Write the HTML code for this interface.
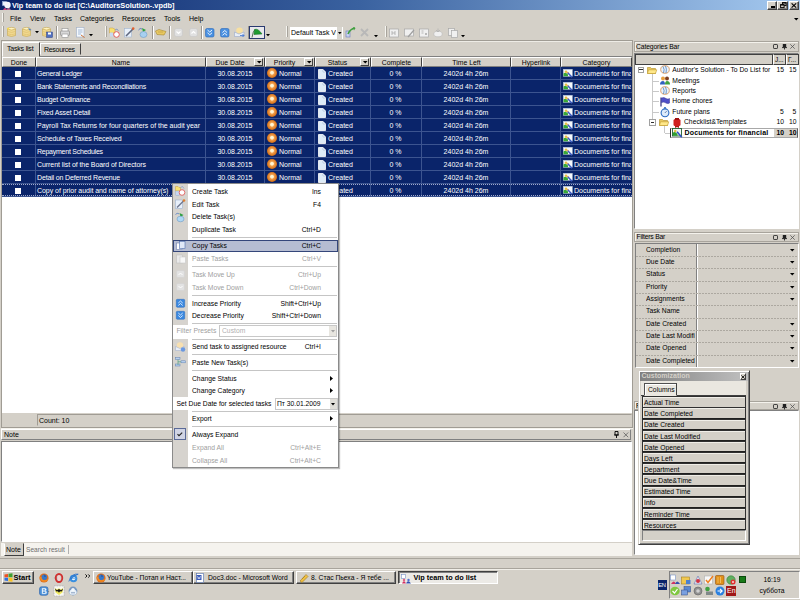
<!DOCTYPE html>
<html><head><meta charset="utf-8">
<style>
*{margin:0;padding:0;box-sizing:border-box}
html,body{width:800px;height:600px;overflow:hidden;background:#D4D0C8;font-family:"Liberation Sans",sans-serif;font-size:7px;color:#000;position:relative}
.a{position:absolute}
.t{position:absolute;white-space:nowrap;line-height:8px;font-size:7px}
.m{font-size:6.75px}
svg{position:absolute;overflow:visible}
</style></head><body>

<div class="a" style="left:0px;top:0px;width:800px;height:10px;background:linear-gradient(90deg,#0A246A 0%,#3A62A0 45%,#A6CAF0 100%)"></div>
<svg style="left:2px;top:1px" width="9" height="9"><rect x="0.5" y="0.5" width="4" height="4" fill="#E8F0FF" stroke="#A0B8E0" stroke-width="0.5"/><circle cx="5.5" cy="4" r="3.2" fill="#F4F4FA"/><path d="M1 9Q3 5 5 9Z" fill="#D04080"/><path d="M4.5 9Q6.5 5 9 9Z" fill="#B06090"/></svg>
<div class="t" style="left:12px;top:1.5px;color:#fff;font-weight:bold;font-size:7.4px;line-height:8px">Vip team to do list [C:\AuditorsSolution-.vpdb]</div>
<div class="a" style="left:767px;top:1px;width:10px;height:8.5px;background:#D4D0C8;border:1px solid;border-color:#fff #404040 #404040 #fff;box-shadow:inset -1px -1px 0 #808080"></div>
<div class="a" style="left:777px;top:1px;width:10.5px;height:8.5px;background:#D4D0C8;border:1px solid;border-color:#fff #404040 #404040 #fff;box-shadow:inset -1px -1px 0 #808080"></div>
<div class="a" style="left:788.5px;top:1px;width:10.5px;height:8.5px;background:#D4D0C8;border:1px solid;border-color:#fff #404040 #404040 #fff;box-shadow:inset -1px -1px 0 #808080"></div>
<div class="a" style="left:770.5px;top:6.3px;width:4px;height:1.3px;background:#000"></div>
<svg style="left:779.5px;top:2px" width="7" height="6"><rect x="2.5" y="0.6" width="3.5" height="3" fill="none" stroke="#000" stroke-width="0.9"/><rect x="2.5" y="0.5" width="3.5" height="1" fill="#000"/><rect x="0.6" y="2.6" width="3.5" height="3" fill="#D4D0C8" stroke="#000" stroke-width="0.9"/><rect x="0.6" y="2.5" width="3.5" height="1" fill="#000"/></svg>
<svg style="left:791px;top:2.5px" width="6" height="5"><path d="M0.6 0.4L5.2 4.6M5.2 0.4L0.6 4.6" stroke="#000" stroke-width="1.2"/></svg>
<div class="a" style="left:2px;top:13px;width:2px;height:9px;border-left:1px solid #F4F4F0;border-right:1px solid #A8A49C"></div>
<div class="t" style="left:10px;top:14.8px;line-height:8px">File</div>
<div class="t" style="left:30px;top:14.8px;line-height:8px">View</div>
<div class="t" style="left:54px;top:14.8px;line-height:8px">Tasks</div>
<div class="t" style="left:80px;top:14.8px;line-height:8px">Categories</div>
<div class="t" style="left:122px;top:14.8px;line-height:8px">Resources</div>
<div class="t" style="left:164px;top:14.8px;line-height:8px">Tools</div>
<div class="t" style="left:189px;top:14.8px;line-height:8px">Help</div>
<svg style="left:793.5px;top:18px" width="5" height="3"><path d="M0 0H4.5L2.25 2.5Z" fill="#000"/></svg>
<div class="a" style="left:2px;top:26px;width:2px;height:11px;border-left:1px solid #F4F4F0;border-right:1px solid #A8A49C"></div>
<svg style="left:7px;top:27px" width="10" height="11"><ellipse cx="4.5" cy="2" rx="4" ry="1.6" fill="#FFF4C0" stroke="#C8A850" stroke-width="0.6"/><path d="M0.5 2V8.5Q4.5 10.5 8.5 8.5V2Q4.5 4 0.5 2Z" fill="#F0D890" stroke="#C8A850" stroke-width="0.6"/><path d="M0.8 4.5Q4.5 6.3 8.2 4.5M0.8 6.8Q4.5 8.6 8.2 6.8" stroke="#D8B860" stroke-width="0.5" fill="none"/><path d="M0 1L1.5 0.5L2 2L1 3Z" fill="#FFE040"/></svg>
<svg style="left:22px;top:27px" width="10" height="11"><ellipse cx="4.5" cy="2" rx="4" ry="1.6" fill="#FFF4C0" stroke="#C8A850" stroke-width="0.6"/><path d="M0.5 2V8.5Q4.5 10.5 8.5 8.5V2Q4.5 4 0.5 2Z" fill="#F0D890" stroke="#C8A850" stroke-width="0.6"/><path d="M0.8 4.5Q4.5 6.3 8.2 4.5M0.8 6.8Q4.5 8.6 8.2 6.8" stroke="#D8B860" stroke-width="0.5" fill="none"/><path d="M6 0.5L9.5 3L7.5 3.5Z" fill="#4A80D0"/></svg>
<svg style="left:35px;top:31px" width="4" height="3"><path d="M0 0H4L2 2.3Z" fill="#000"/></svg>
<svg style="left:42px;top:27px" width="11" height="11"><ellipse cx="4.5" cy="2" rx="4" ry="1.6" fill="#FFF4C0" stroke="#C8A850" stroke-width="0.6"/><path d="M0.5 2V8.5Q4.5 10.5 8.5 8.5V2Q4.5 4 0.5 2Z" fill="#F0D890" stroke="#C8A850" stroke-width="0.6"/><path d="M0.8 4.5Q4.5 6.3 8.2 4.5M0.8 6.8Q4.5 8.6 8.2 6.8" stroke="#D8B860" stroke-width="0.5" fill="none"/><rect x="4.5" y="5" width="6" height="5.5" fill="#5070C0" stroke="#304080" stroke-width="0.5"/><rect x="6" y="5.5" width="3" height="2" fill="#fff"/></svg>
<div class="a" style="left:55.5px;top:25.5px;width:2px;height:13px;border-left:1px solid #9A9690;border-right:1px solid #fff"></div>
<svg style="left:60px;top:28px" width="10" height="10"><rect x="2" y="0.5" width="6" height="3" fill="#fff" stroke="#909090" stroke-width="0.6"/><rect x="0.5" y="3" width="9" height="4.5" rx="1" fill="#D8D8D8" stroke="#808080" stroke-width="0.6"/><rect x="2" y="6" width="6" height="3.5" fill="#fff" stroke="#909090" stroke-width="0.6"/></svg>
<svg style="left:75.5px;top:27px" width="9" height="11"><rect x="0.5" y="0.5" width="7.5" height="9.5" fill="#F4F8FC" stroke="#A0B0C8" stroke-width="0.6"/><path d="M2 3H6.5M2 5H6.5M2 7H5" stroke="#7090C0" stroke-width="0.6"/><path d="M5 8L8.5 10.5" stroke="#D07030" stroke-width="1"/></svg>
<svg style="left:88.5px;top:33.5px" width="4" height="3"><path d="M0 0H4L2 2.3Z" fill="#000"/></svg>
<div class="a" style="left:104.5px;top:26px;width:2px;height:11px;border-left:1px solid #F4F4F0;border-right:1px solid #A8A49C"></div>
<svg style="left:109px;top:27px" width="11" height="11"><path d="M0.5 1H4L5 2H6V6H0.5Z" fill="#F8E070" stroke="#C8A040" stroke-width="0.5"/><rect x="1" y="5.5" width="3" height="4" fill="#C8D8F0"/><circle cx="7.5" cy="7.5" r="2.8" fill="#fff" stroke="#E04040" stroke-width="0.8"/><path d="M6 3L8 2L9.5 4" stroke="#6080C0" stroke-width="0.6" fill="none"/></svg>
<svg style="left:124px;top:27px" width="11" height="11"><rect x="0.5" y="1.5" width="7" height="8.5" fill="#E8F0FA" stroke="#A0B4D0" stroke-width="0.6"/><path d="M2 9L9 2" stroke="#606880" stroke-width="1.6"/><circle cx="9.2" cy="1.6" r="1.3" fill="#E06030"/></svg>
<svg style="left:138px;top:27px" width="11" height="11"><path d="M0.5 3Q2 0.5 4 2" stroke="#6080C0" stroke-width="1" fill="none"/><path d="M4 1L8 3L5 5Z" fill="#30A040"/><ellipse cx="5.5" cy="7.5" rx="3.5" ry="3" fill="#A8D0F0" stroke="#6090C0" stroke-width="0.5"/></svg>
<div class="a" style="left:151.5px;top:25.5px;width:2px;height:13px;border-left:1px solid #9A9690;border-right:1px solid #fff"></div>
<svg style="left:155px;top:29px" width="12" height="7"><path d="M0.5 2L4 0.5L11 2.5L9 6L2 5.5Z" fill="#E8C860" stroke="#A88830" stroke-width="0.6"/><path d="M3 3H8" stroke="#B89840" stroke-width="0.6"/></svg>
<div class="a" style="left:168.5px;top:25.5px;width:2px;height:13px;border-left:1px solid #9A9690;border-right:1px solid #fff"></div>
<svg style="left:174px;top:27.5px" width="9" height="9"><rect x="0.5" y="0.5" width="8" height="8" rx="2" fill="#E0E0E0" stroke="#C8C8C8" stroke-width="0.6"/><path d="M2.5 3.5L4.5 5.5L6.5 3.5" stroke="#fff" stroke-width="1.1" fill="none"/></svg>
<svg style="left:189px;top:27.5px" width="9" height="9"><rect x="0.5" y="0.5" width="8" height="8" rx="2" fill="#E0E0E0" stroke="#C8C8C8" stroke-width="0.6"/><path d="M2.5 5.5L4.5 3.5L6.5 5.5" stroke="#fff" stroke-width="1.1" fill="none"/></svg>
<div class="a" style="left:201px;top:25.5px;width:2px;height:13px;border-left:1px solid #9A9690;border-right:1px solid #fff"></div>
<svg style="left:205px;top:27.5px" width="9.5" height="9.5"><rect x="0.5" y="0.5" width="8.5" height="8.5" rx="1.5" fill="#4A90E0" stroke="#2A68B8" stroke-width="0.6"/><path d="M2.5 2L4.75 4L7 2M2.5 4.8L4.75 6.8L7 4.8" stroke="#fff" stroke-width="0.9" fill="none"/></svg>
<svg style="left:220px;top:27.5px" width="9.5" height="9.5"><rect x="0.5" y="0.5" width="8.5" height="8.5" rx="1.5" fill="#4A90E0" stroke="#2A68B8" stroke-width="0.6"/><path d="M2.5 4.5L4.75 2.5L7 4.5M2.5 7.3L4.75 5.3L7 7.3" stroke="#fff" stroke-width="0.9" fill="none"/></svg>
<svg style="left:234px;top:27px" width="11" height="11"><circle cx="5.5" cy="3.8" r="3.3" fill="#F8E0A0"/><path d="M0.5 5L5 7L10 5V9.5H0.5Z" fill="#E8EEF8" stroke="#9AAAC8" stroke-width="0.6"/><path d="M6 8.5H10L8.5 7M10 8.5L8.5 10" stroke="#3A70D0" stroke-width="0.8" fill="none"/></svg>
<div class="a" style="left:247.5px;top:25.5px;width:2px;height:13px;border-left:1px solid #9A9690;border-right:1px solid #fff"></div>
<div class="a" style="left:249px;top:26px;width:15.5px;height:12.5px;background:#E8E8EC;border:1px solid #2A3A70"></div>
<svg style="left:251px;top:27.5px" width="12" height="10"><path d="M1 9.5Q2 3 4 1.5" stroke="#305030" stroke-width="0.8" fill="none"/><path d="M3.5 1.5Q7 0 11 6L3 6.5Z" fill="#1E9A30" stroke="#0E6A20" stroke-width="0.5"/></svg>
<svg style="left:266px;top:34px" width="4" height="3"><path d="M0 0H4L2 2.3Z" fill="#000"/></svg>
<div class="a" style="left:286px;top:26px;width:2px;height:11px;border-left:1px solid #F4F4F0;border-right:1px solid #A8A49C"></div>
<div class="a" style="left:289.5px;top:26.5px;width:53px;height:12.5px;background:#fff"></div>
<div class="t" style="left:291px;top:28.5px;width:45px;overflow:hidden;font-size:7px">Default Task View</div>
<div class="a" style="left:336.5px;top:27px;width:5.5px;height:11.5px;background:#D8D5CE"></div>
<svg style="left:337.5px;top:32px" width="4" height="3"><path d="M0 0H3.6L1.8 2.2Z" fill="#000"/></svg>
<svg style="left:345px;top:27px" width="11" height="11"><rect x="1" y="4" width="4" height="6" fill="#C8D0F0" stroke="#6878C0" stroke-width="0.6"/><path d="M3 7Q5 2 10 1" stroke="#40A040" stroke-width="1.6" fill="none"/><path d="M8 0L10.5 1L9 3.5" fill="#40A040"/></svg>
<svg style="left:360px;top:28px" width="9" height="9"><path d="M1 1L8 8M8 1L1 8" stroke="#B8B8B8" stroke-width="1.8"/></svg>
<svg style="left:374px;top:34.5px" width="4" height="3"><path d="M0 0H4L2 2.3Z" fill="#000"/></svg>
<div class="a" style="left:384.5px;top:26px;width:2px;height:11px;border-left:1px solid #F4F4F0;border-right:1px solid #A8A49C"></div>
<svg style="left:389px;top:27.5px" width="10.5" height="10"><rect x="0.5" y="1" width="9" height="8" fill="#F0F0F0" stroke="#A8A8A8" stroke-width="0.7"/><path d="M3 3V7M6 3V7M3 5H6" stroke="#A0A0A0" stroke-width="0.7"/></svg>
<svg style="left:403.5px;top:27.5px" width="11" height="10"><rect x="0.5" y="1" width="9" height="7" fill="#F0F0F0" stroke="#A8A8A8" stroke-width="0.7"/><path d="M4 9L10 2" stroke="#A0A0A0" stroke-width="1.2"/></svg>
<svg style="left:419px;top:27.5px" width="10" height="10"><rect x="0.5" y="1" width="9" height="8" fill="#F0F0F0" stroke="#A8A8A8" stroke-width="0.7"/><path d="M2.5 3H4.5M2.5 5H4.5M6 5L8 7M8 5L6 7" stroke="#A0A0A0" stroke-width="0.7"/></svg>
<svg style="left:433px;top:28px" width="10" height="9"><ellipse cx="5" cy="6" rx="4.2" ry="2.8" fill="#F0F0F0" stroke="#B8B8B8" stroke-width="0.6"/><path d="M5 0.5V4M3 2L5 4L7 2" stroke="#B0B0B0" stroke-width="0.7" fill="none"/></svg>
<svg style="left:448px;top:27.5px" width="10" height="10"><rect x="0.5" y="0.5" width="6" height="7" fill="#F0F0F0" stroke="#A8A8A8" stroke-width="0.7"/><rect x="3.5" y="2.5" width="6" height="7" fill="#F0F0F0" stroke="#A8A8A8" stroke-width="0.7"/></svg>
<svg style="left:461px;top:34.5px" width="4" height="3"><path d="M0 0H4L2 2.3Z" fill="#000"/></svg>
<div class="a" style="left:0px;top:558px;width:800px;height:1px;background:#A8A49C"></div>
<div class="a" style="left:0px;top:568px;width:800px;height:1px;background:#A8A49C"></div>
<div class="a" style="left:0px;top:569px;width:800px;height:1px;background:#F0EEE8"></div>
<div class="a" style="left:1.5px;top:571px;width:32px;height:13px;background:#D4D0C8;border:1px solid;border-color:#fff #404040 #404040 #fff;box-shadow:inset -1px -1px 0 #808080"></div>
<svg style="left:3.5px;top:573px" width="9" height="9"><path d="M0.5 1.5L4 1V4.2H0.5Z" fill="#F05020"/><path d="M4.5 0.8L8.5 0.3V4.2H4.5Z" fill="#40A030"/><path d="M0.5 4.8H4V8L0.5 7.5Z" fill="#3070E0"/><path d="M4.5 4.8H8.5V8.7L4.5 8.2Z" fill="#F8C020"/></svg>
<div class="t" style="left:13.5px;top:573.5px;font-weight:bold;font-size:7.5px;line-height:8px">Start</div>
<svg style="left:38.5px;top:573px" width="10" height="10"><circle cx="5" cy="5" r="4.6" fill="#E0701C"/><circle cx="5.3" cy="4.3" r="2.8" fill="#3A78C8"/><path d="M0.6 4Q1.5 8.5 5.5 8.8Q8.5 8.5 9.4 5Q8 7.5 5.5 7.2Q2.5 7 2.5 4Z" fill="#F08A20"/><path d="M5 1.5Q6.5 2.5 6 4" stroke="#1A3A80" stroke-width="0.7" fill="none"/></svg>
<svg style="left:53px;top:573px" width="10" height="10"><path d="M0.5 5L4 3.5V6.5Z" fill="#A8A8A8"/><ellipse cx="6" cy="5" rx="3.3" ry="4" fill="none" stroke="#D03030" stroke-width="1.8"/><ellipse cx="6" cy="5" rx="1.3" ry="2.8" fill="#F4D0D0"/></svg>
<svg style="left:67.5px;top:573px" width="11" height="10"><circle cx="5.5" cy="5.5" r="3.8" fill="#3A90E0"/><circle cx="5.5" cy="5.5" r="1.8" fill="#E8F4FF"/><path d="M3.5 5.2H7.5" stroke="#3A90E0" stroke-width="0.8"/><path d="M0.8 8.5Q4 0 10.2 1.2Q7 1.5 3 6" stroke="#2A70C8" stroke-width="0.9" fill="none"/></svg>
<svg style="left:39px;top:586px" width="11" height="10"><rect x="0.5" y="0.8" width="8.5" height="8.5" rx="2" fill="#4A90D8" stroke="#2A60A8" stroke-width="0.6"/><path d="M3 2.3H5.8Q7.3 2.3 7.3 3.6Q7.3 4.6 6.2 4.9Q7.7 5.2 7.7 6.5Q7.7 7.8 6 7.8H3Z" fill="#fff" stroke="#C8E0F8" stroke-width="0.4"/><path d="M3.8 3.3H5.5Q6.2 3.3 6.2 4Q6.2 4.5 5.5 4.5H3.8ZM3.8 5.4H5.7Q6.5 5.4 6.5 6.2Q6.5 6.9 5.7 6.9H3.8Z" fill="#4A90D8"/><path d="M9 5L10.5 5.5L9 6" fill="#707070"/></svg>
<svg style="left:54px;top:586px" width="10" height="10"><rect x="0" y="0" width="10" height="10" fill="#F8F8F0" stroke="#8080A0" stroke-width="0.5" stroke-dasharray="0.8 0.8"/><path d="M0.8 2L3 3.5L5 2.2L7 3.5L9.2 2L8.5 6.5L5 9L1.5 6.5Z" fill="#F0E860"/><path d="M1 2.5L3 4.2L5 3L7 4.2L9 2.5L8 5.5Q6 4.8 5 6.8Q4 4.8 2 5.5Z" fill="#111"/></svg>
<svg style="left:68px;top:586px" width="10" height="10"><circle cx="5" cy="5" r="4.4" fill="#7898C0"/><ellipse cx="5" cy="6.2" rx="3.6" ry="2.6" fill="#E8F0F8"/><circle cx="5" cy="3.6" r="1.7" fill="#F4F8FC"/><path d="M3 6.8H7" stroke="#4A6A98" stroke-width="0.6"/></svg>
<svg style="left:84.5px;top:574px" width="6" height="4"><path d="M0.4 0.4L2 2L0.4 3.6M3.2 0.4L4.8 2L3.2 3.6" stroke="#000" stroke-width="0.9" fill="none"/></svg>
<div class="a" style="left:92.5px;top:571px;width:100px;height:13px;background:#D4D0C8;border:1px solid;border-color:#fff #404040 #404040 #fff;box-shadow:inset -1px -1px 0 #808080"></div>
<svg style="left:95.5px;top:573px" width="10" height="10"><circle cx="5" cy="5" r="4.6" fill="#E0701C"/><circle cx="5.3" cy="4.3" r="2.8" fill="#3A78C8"/><path d="M0.6 4Q1.5 8.5 5.5 8.8Q8.5 8.5 9.4 5Q8 7.5 5.5 7.2Q2.5 7 2.5 4Z" fill="#F08A20"/><path d="M5 1.5Q6.5 2.5 6 4" stroke="#1A3A80" stroke-width="0.7" fill="none"/></svg>
<div class="t" style="left:107px;top:573.5px;font-size:6.75px">YouTube - &#1055;&#1086;&#1090;&#1072;&#1087; &#1080; &#1053;&#1072;&#1089;&#1090;...</div>
<div class="a" style="left:193px;top:571px;width:100.5px;height:13px;background:#D4D0C8;border:1px solid;border-color:#fff #404040 #404040 #fff;box-shadow:inset -1px -1px 0 #808080"></div>
<svg style="left:196px;top:573px" width="9" height="10"><rect x="0.5" y="0.5" width="7" height="9" fill="#fff" stroke="#5070B0" stroke-width="0.6"/><rect x="0.5" y="2" width="5" height="5" fill="#3A5AB8"/><path d="M1.5 3L2.3 6L3 4L3.7 6L4.5 3" stroke="#fff" stroke-width="0.5" fill="none"/></svg>
<div class="t" style="left:208px;top:573.5px;font-size:6.75px">Doc3.doc - Microsoft Word</div>
<div class="a" style="left:296px;top:571px;width:99.5px;height:13px;background:#D4D0C8;border:1px solid;border-color:#fff #404040 #404040 #fff;box-shadow:inset -1px -1px 0 #808080"></div>
<svg style="left:299px;top:573px" width="10" height="10"><path d="M1 8L7 1.5L9 3.5L3 9.5Z" fill="#F0C040" stroke="#A07820" stroke-width="0.6"/><path d="M3 6L6 3" stroke="#A07820" stroke-width="0.6"/></svg>
<div class="t" style="left:311px;top:573.5px;font-size:6.75px">8. &#1057;&#1090;&#1072;&#1089; &#1055;&#1100;&#1077;&#1093;&#1072; - &#1071; &#1090;&#1077;&#1073;&#1077; ...</div>
<div class="a" style="left:398px;top:571px;width:100px;height:13px;background:#ECEAE6;border:1px solid;border-color:#404040 #fff #fff #404040;box-shadow:inset 1px 1px 0 #808080"></div>
<svg style="left:401px;top:573.5px" width="11" height="10"><rect x="0.5" y="0.5" width="4" height="4" fill="#fff" stroke="#6080C0" stroke-width="0.5"/><path d="M1 9.5Q3 5 5 9.5Z" fill="#D03060"/><path d="M5 9.5Q7 5 10 9.5Z" fill="#3050B0"/><circle cx="3" cy="6" r="1.2" fill="#E06080"/><circle cx="7.5" cy="6" r="1.2" fill="#5070D0"/></svg>
<div class="t" style="left:413.5px;top:573.7px;font-size:7.3px;font-weight:bold">Vip team to do list</div>
<div class="a" style="left:658px;top:579.5px;width:8.5px;height:10px;background:#0A246A"></div>
<div class="t" style="left:658.3px;top:581px;font-size:5.8px;color:#fff;letter-spacing:-0.3px">EN</div>
<div class="a" style="left:668.5px;top:571px;width:131.5px;height:27.5px;border:1px solid;border-color:#808080 #fff #fff #808080"></div>
<svg style="left:670px;top:575px" width="10" height="10"><rect x="0.5" y="0" width="5" height="5" fill="#fff" stroke="#6080C0" stroke-width="0.5"/><path d="M1 9Q4 4 6 9Z" fill="#D03060"/><path d="M5 9Q7 4 10 9Z" fill="#3050B0"/></svg>
<svg style="left:681px;top:575px" width="10" height="10"><rect x="0.5" y="2" width="8" height="7" fill="#F0C850" stroke="#A88020" stroke-width="0.6"/><rect x="5" y="5" width="4.5" height="4" fill="#4A80D0"/></svg>
<svg style="left:693px;top:575px" width="10" height="10"><path d="M1 9L5 1L9 9Z" fill="#E8E8F0" stroke="#6070B0" stroke-width="0.6"/><circle cx="5" cy="6" r="2" fill="#D03040"/></svg>
<svg style="left:704px;top:575px" width="10" height="10"><rect x="0.5" y="1" width="8" height="8" fill="#F8F8F8" stroke="#B0B0B0" stroke-width="0.6"/><path d="M2 5L4 7.5L9 1" stroke="#F08020" stroke-width="1.5" fill="none"/></svg>
<svg style="left:715px;top:575px" width="10" height="10"><rect x="0.5" y="0.5" width="8.5" height="9" rx="1" fill="#E0901A" stroke="#905010" stroke-width="0.6"/><path d="M3 2V8M5.5 2V8" stroke="#F8D080" stroke-width="0.7"/></svg>
<svg style="left:726px;top:575px" width="10" height="10"><circle cx="5" cy="5" r="4.2" fill="#60B060" stroke="#308030" stroke-width="0.6"/><circle cx="7" cy="7" r="2.5" fill="#E03030"/><path d="M6 6L8 8M8 6L6 8" stroke="#fff" stroke-width="0.6"/></svg>
<svg style="left:670px;top:586px" width="10" height="10"><ellipse cx="5" cy="5" rx="4.7" ry="4.3" fill="#80C840"/><path d="M2.5 5L4.5 7L7.5 3" stroke="#fff" stroke-width="1.2" fill="none"/></svg>
<svg style="left:681px;top:586px" width="10" height="10"><rect x="3" y="0.5" width="6.5" height="5.5" fill="#5A88D0" stroke="#304880" stroke-width="0.5"/><rect x="0.5" y="4" width="6" height="5" fill="#7AA0E0" stroke="#304880" stroke-width="0.5"/></svg>
<svg style="left:693px;top:586px" width="10" height="10"><circle cx="5" cy="5" r="4" fill="#909090" stroke="#606060" stroke-width="0.6"/><circle cx="5" cy="5" r="1.8" fill="#D0D0D0"/></svg>
<svg style="left:704px;top:586px" width="10" height="10"><circle cx="3.5" cy="3" r="2.3" fill="#40A040"/><rect x="2" y="5.5" width="7" height="3.5" fill="#808888"/></svg>
<svg style="left:715px;top:586px" width="10" height="10"><circle cx="5" cy="5" r="4.5" fill="#2A80E0"/><path d="M2.5 5H7M5 2.8L7.2 5L5 7.2" stroke="#fff" stroke-width="1.1" fill="none"/></svg>
<div class="a" style="left:738.5px;top:576px;width:7px;height:6.5px;background:#187A18;border:0.5px solid #0A4A0A"></div>
<div class="a" style="left:726px;top:585.5px;width:10px;height:10px;background:#A01818"></div>
<div class="t" style="left:727px;top:587px;font-size:7px;color:#fff">En</div>
<div class="t" style="left:752px;top:575.5px;width:40px;text-align:center;font-size:6.75px">16:19</div>
<div class="t" style="left:752px;top:587px;width:40px;text-align:center;font-size:6.75px">&#1089;&#1091;&#1073;&#1073;&#1086;&#1090;&#1072;</div>
<div class="a" style="left:1px;top:56px;width:632px;height:357px;background:#fff;border:1px solid;border-color:#808080 #fff #fff #808080"></div>
<div class="a" style="left:2px;top:57px;width:34px;height:10px;background:#D4D0C8;border-right:1px solid #404040;border-bottom:1px solid #808080;border-left:1px solid #fff;border-top:1px solid #fff"></div>
<div class="t" style="left:2px;top:58.6px;width:34px;text-align:center;font-size:6.85px">Done</div>
<div class="a" style="left:36px;top:57px;width:170px;height:10px;background:#D4D0C8;border-right:1px solid #404040;border-bottom:1px solid #808080;border-left:1px solid #fff;border-top:1px solid #fff"></div>
<div class="t" style="left:36px;top:58.6px;width:170px;text-align:center;font-size:6.85px">Name</div>
<div class="a" style="left:206px;top:57px;width:59px;height:10px;background:#D4D0C8;border-right:1px solid #404040;border-bottom:1px solid #808080;border-left:1px solid #fff;border-top:1px solid #fff"></div>
<div class="t" style="left:206px;top:58.6px;width:48px;text-align:center;font-size:6.85px">Due Date</div>
<div class="a" style="left:254px;top:58px;width:9px;height:8px;background:#D4D0C8;border:1px solid;border-color:#fff #404040 #404040 #fff"></div>
<svg style="left:256.5px;top:61px" width="5" height="3"><path d="M0 0H4.5L2.25 2.5Z" fill="#000"/></svg>
<div class="a" style="left:265px;top:57px;width:50px;height:10px;background:#D4D0C8;border-right:1px solid #404040;border-bottom:1px solid #808080;border-left:1px solid #fff;border-top:1px solid #fff"></div>
<div class="t" style="left:265px;top:58.6px;width:39px;text-align:center;font-size:6.85px">Priority</div>
<div class="a" style="left:304px;top:58px;width:9px;height:8px;background:#D4D0C8;border:1px solid;border-color:#fff #404040 #404040 #fff"></div>
<svg style="left:306.5px;top:61px" width="5" height="3"><path d="M0 0H4.5L2.25 2.5Z" fill="#000"/></svg>
<div class="a" style="left:315px;top:57px;width:56px;height:10px;background:#D4D0C8;border-right:1px solid #404040;border-bottom:1px solid #808080;border-left:1px solid #fff;border-top:1px solid #fff"></div>
<div class="t" style="left:315px;top:58.6px;width:45px;text-align:center;font-size:6.85px">Status</div>
<div class="a" style="left:360px;top:58px;width:9px;height:8px;background:#D4D0C8;border:1px solid;border-color:#fff #404040 #404040 #fff"></div>
<svg style="left:362.5px;top:61px" width="5" height="3"><path d="M0 0H4.5L2.25 2.5Z" fill="#000"/></svg>
<div class="a" style="left:371px;top:57px;width:51px;height:10px;background:#D4D0C8;border-right:1px solid #404040;border-bottom:1px solid #808080;border-left:1px solid #fff;border-top:1px solid #fff"></div>
<div class="t" style="left:371px;top:58.6px;width:51px;text-align:center;font-size:6.85px">Complete</div>
<div class="a" style="left:422px;top:57px;width:89px;height:10px;background:#D4D0C8;border-right:1px solid #404040;border-bottom:1px solid #808080;border-left:1px solid #fff;border-top:1px solid #fff"></div>
<div class="t" style="left:422px;top:58.6px;width:89px;text-align:center;font-size:6.85px">Time Left</div>
<div class="a" style="left:511px;top:57px;width:50px;height:10px;background:#D4D0C8;border-right:1px solid #404040;border-bottom:1px solid #808080;border-left:1px solid #fff;border-top:1px solid #fff"></div>
<div class="t" style="left:511px;top:58.6px;width:50px;text-align:center;font-size:6.85px">Hyperlink</div>
<div class="a" style="left:561px;top:57px;width:71px;height:10px;background:#D4D0C8;border-right:1px solid #404040;border-bottom:1px solid #808080;border-left:1px solid #fff;border-top:1px solid #fff"></div>
<div class="t" style="left:561px;top:58.6px;width:71px;text-align:center;font-size:6.85px">Category</div>
<div class="a" style="left:2px;top:67px;width:630px;height:13px;background:#0A246A;border-bottom:1px solid #3C5490"></div>
<div class="a" style="left:35px;top:67px;width:1px;height:13px;background:#3C5490"></div>
<div class="a" style="left:205px;top:67px;width:1px;height:13px;background:#3C5490"></div>
<div class="a" style="left:264px;top:67px;width:1px;height:13px;background:#3C5490"></div>
<div class="a" style="left:314px;top:67px;width:1px;height:13px;background:#3C5490"></div>
<div class="a" style="left:370px;top:67px;width:1px;height:13px;background:#3C5490"></div>
<div class="a" style="left:421px;top:67px;width:1px;height:13px;background:#3C5490"></div>
<div class="a" style="left:510px;top:67px;width:1px;height:13px;background:#3C5490"></div>
<div class="a" style="left:560px;top:67px;width:1px;height:13px;background:#3C5490"></div>
<div class="a" style="left:15px;top:71px;width:6px;height:6px;background:#fff"></div>
<div class="t" style="left:37px;top:69.5px;color:#fff;letter-spacing:-0.261px">General Ledger</div>
<div class="t" style="left:205px;top:69.5px;width:60px;text-align:center;color:#fff">30.08.2015</div>
<div class="a" style="left:266.8px;top:68.2px;width:10px;height:10px;border-radius:50%;background:radial-gradient(circle at 50% 47%,#FFF8E0 0,#FFF0C8 20%,#F0A050 32%,#E08028 55%,#C06010 80%,#8A4008 100%)"></div>
<div class="t" style="left:279px;top:69.5px;color:#fff">Normal</div>
<svg style="left:317.5px;top:68.5px" width="8" height="10"><path d="M0.5 0.5H5L7.5 3V9.5H0.5Z" fill="#DDEBF7" stroke="#fff" stroke-width="0.8"/><path d="M5 0.5V3H7.5" fill="#fff" stroke="#9DB7D5" stroke-width="0.6"/></svg>
<div class="t" style="left:328px;top:69.5px;color:#fff">Created</div>
<div class="t" style="left:370px;top:69.5px;width:51px;text-align:center;color:#fff">0 %</div>
<div class="t" style="left:421px;top:69.5px;width:90px;text-align:center;color:#fff">2402d 4h 26m</div>
<svg style="left:562.5px;top:68.8px" width="10" height="9"><rect x="0.3" y="0.3" width="9" height="7" fill="#F4F8FC" stroke="#B8C8D8" stroke-width="0.5"/><path d="M0.5 7.3V4.5Q2.5 2.5 5 5.5L5 7.3Z" fill="#38A838"/><circle cx="3" cy="2.8" r="1.3" fill="#E8C040"/><path d="M4.5 3.5L9 8.2" stroke="#3A5AC0" stroke-width="1.5"/><path d="M4.2 3.2L5.2 4.2" stroke="#E0A060" stroke-width="1.2"/></svg>
<div class="t" style="left:574px;top:69.5px;width:57px;overflow:hidden;color:#fff">Documents for financial</div>
<div class="a" style="left:2px;top:80px;width:630px;height:13px;background:#0A246A;border-bottom:1px solid #3C5490"></div>
<div class="a" style="left:35px;top:80px;width:1px;height:13px;background:#3C5490"></div>
<div class="a" style="left:205px;top:80px;width:1px;height:13px;background:#3C5490"></div>
<div class="a" style="left:264px;top:80px;width:1px;height:13px;background:#3C5490"></div>
<div class="a" style="left:314px;top:80px;width:1px;height:13px;background:#3C5490"></div>
<div class="a" style="left:370px;top:80px;width:1px;height:13px;background:#3C5490"></div>
<div class="a" style="left:421px;top:80px;width:1px;height:13px;background:#3C5490"></div>
<div class="a" style="left:510px;top:80px;width:1px;height:13px;background:#3C5490"></div>
<div class="a" style="left:560px;top:80px;width:1px;height:13px;background:#3C5490"></div>
<div class="a" style="left:15px;top:84px;width:6px;height:6px;background:#fff"></div>
<div class="t" style="left:37px;top:82.5px;color:#fff;letter-spacing:-0.199px">Bank Statements and Reconciliations</div>
<div class="t" style="left:205px;top:82.5px;width:60px;text-align:center;color:#fff">30.08.2015</div>
<div class="a" style="left:266.8px;top:81.2px;width:10px;height:10px;border-radius:50%;background:radial-gradient(circle at 50% 47%,#FFF8E0 0,#FFF0C8 20%,#F0A050 32%,#E08028 55%,#C06010 80%,#8A4008 100%)"></div>
<div class="t" style="left:279px;top:82.5px;color:#fff">Normal</div>
<svg style="left:317.5px;top:81.5px" width="8" height="10"><path d="M0.5 0.5H5L7.5 3V9.5H0.5Z" fill="#DDEBF7" stroke="#fff" stroke-width="0.8"/><path d="M5 0.5V3H7.5" fill="#fff" stroke="#9DB7D5" stroke-width="0.6"/></svg>
<div class="t" style="left:328px;top:82.5px;color:#fff">Created</div>
<div class="t" style="left:370px;top:82.5px;width:51px;text-align:center;color:#fff">0 %</div>
<div class="t" style="left:421px;top:82.5px;width:90px;text-align:center;color:#fff">2402d 4h 26m</div>
<svg style="left:562.5px;top:81.8px" width="10" height="9"><rect x="0.3" y="0.3" width="9" height="7" fill="#F4F8FC" stroke="#B8C8D8" stroke-width="0.5"/><path d="M0.5 7.3V4.5Q2.5 2.5 5 5.5L5 7.3Z" fill="#38A838"/><circle cx="3" cy="2.8" r="1.3" fill="#E8C040"/><path d="M4.5 3.5L9 8.2" stroke="#3A5AC0" stroke-width="1.5"/><path d="M4.2 3.2L5.2 4.2" stroke="#E0A060" stroke-width="1.2"/></svg>
<div class="t" style="left:574px;top:82.5px;width:57px;overflow:hidden;color:#fff">Documents for financial</div>
<div class="a" style="left:2px;top:93px;width:630px;height:13px;background:#0A246A;border-bottom:1px solid #3C5490"></div>
<div class="a" style="left:35px;top:93px;width:1px;height:13px;background:#3C5490"></div>
<div class="a" style="left:205px;top:93px;width:1px;height:13px;background:#3C5490"></div>
<div class="a" style="left:264px;top:93px;width:1px;height:13px;background:#3C5490"></div>
<div class="a" style="left:314px;top:93px;width:1px;height:13px;background:#3C5490"></div>
<div class="a" style="left:370px;top:93px;width:1px;height:13px;background:#3C5490"></div>
<div class="a" style="left:421px;top:93px;width:1px;height:13px;background:#3C5490"></div>
<div class="a" style="left:510px;top:93px;width:1px;height:13px;background:#3C5490"></div>
<div class="a" style="left:560px;top:93px;width:1px;height:13px;background:#3C5490"></div>
<div class="a" style="left:15px;top:97px;width:6px;height:6px;background:#fff"></div>
<div class="t" style="left:37px;top:95.5px;color:#fff;letter-spacing:-0.199px">Budget Ordinance</div>
<div class="t" style="left:205px;top:95.5px;width:60px;text-align:center;color:#fff">30.08.2015</div>
<div class="a" style="left:266.8px;top:94.2px;width:10px;height:10px;border-radius:50%;background:radial-gradient(circle at 50% 47%,#FFF8E0 0,#FFF0C8 20%,#F0A050 32%,#E08028 55%,#C06010 80%,#8A4008 100%)"></div>
<div class="t" style="left:279px;top:95.5px;color:#fff">Normal</div>
<svg style="left:317.5px;top:94.5px" width="8" height="10"><path d="M0.5 0.5H5L7.5 3V9.5H0.5Z" fill="#DDEBF7" stroke="#fff" stroke-width="0.8"/><path d="M5 0.5V3H7.5" fill="#fff" stroke="#9DB7D5" stroke-width="0.6"/></svg>
<div class="t" style="left:328px;top:95.5px;color:#fff">Created</div>
<div class="t" style="left:370px;top:95.5px;width:51px;text-align:center;color:#fff">0 %</div>
<div class="t" style="left:421px;top:95.5px;width:90px;text-align:center;color:#fff">2402d 4h 26m</div>
<svg style="left:562.5px;top:94.8px" width="10" height="9"><rect x="0.3" y="0.3" width="9" height="7" fill="#F4F8FC" stroke="#B8C8D8" stroke-width="0.5"/><path d="M0.5 7.3V4.5Q2.5 2.5 5 5.5L5 7.3Z" fill="#38A838"/><circle cx="3" cy="2.8" r="1.3" fill="#E8C040"/><path d="M4.5 3.5L9 8.2" stroke="#3A5AC0" stroke-width="1.5"/><path d="M4.2 3.2L5.2 4.2" stroke="#E0A060" stroke-width="1.2"/></svg>
<div class="t" style="left:574px;top:95.5px;width:57px;overflow:hidden;color:#fff">Documents for financial</div>
<div class="a" style="left:2px;top:106px;width:630px;height:13px;background:#0A246A;border-bottom:1px solid #3C5490"></div>
<div class="a" style="left:35px;top:106px;width:1px;height:13px;background:#3C5490"></div>
<div class="a" style="left:205px;top:106px;width:1px;height:13px;background:#3C5490"></div>
<div class="a" style="left:264px;top:106px;width:1px;height:13px;background:#3C5490"></div>
<div class="a" style="left:314px;top:106px;width:1px;height:13px;background:#3C5490"></div>
<div class="a" style="left:370px;top:106px;width:1px;height:13px;background:#3C5490"></div>
<div class="a" style="left:421px;top:106px;width:1px;height:13px;background:#3C5490"></div>
<div class="a" style="left:510px;top:106px;width:1px;height:13px;background:#3C5490"></div>
<div class="a" style="left:560px;top:106px;width:1px;height:13px;background:#3C5490"></div>
<div class="a" style="left:15px;top:110px;width:6px;height:6px;background:#fff"></div>
<div class="t" style="left:37px;top:108.5px;color:#fff;letter-spacing:-0.154px">Fixed Asset Detail</div>
<div class="t" style="left:205px;top:108.5px;width:60px;text-align:center;color:#fff">30.08.2015</div>
<div class="a" style="left:266.8px;top:107.2px;width:10px;height:10px;border-radius:50%;background:radial-gradient(circle at 50% 47%,#FFF8E0 0,#FFF0C8 20%,#F0A050 32%,#E08028 55%,#C06010 80%,#8A4008 100%)"></div>
<div class="t" style="left:279px;top:108.5px;color:#fff">Normal</div>
<svg style="left:317.5px;top:107.5px" width="8" height="10"><path d="M0.5 0.5H5L7.5 3V9.5H0.5Z" fill="#DDEBF7" stroke="#fff" stroke-width="0.8"/><path d="M5 0.5V3H7.5" fill="#fff" stroke="#9DB7D5" stroke-width="0.6"/></svg>
<div class="t" style="left:328px;top:108.5px;color:#fff">Created</div>
<div class="t" style="left:370px;top:108.5px;width:51px;text-align:center;color:#fff">0 %</div>
<div class="t" style="left:421px;top:108.5px;width:90px;text-align:center;color:#fff">2402d 4h 26m</div>
<svg style="left:562.5px;top:107.8px" width="10" height="9"><rect x="0.3" y="0.3" width="9" height="7" fill="#F4F8FC" stroke="#B8C8D8" stroke-width="0.5"/><path d="M0.5 7.3V4.5Q2.5 2.5 5 5.5L5 7.3Z" fill="#38A838"/><circle cx="3" cy="2.8" r="1.3" fill="#E8C040"/><path d="M4.5 3.5L9 8.2" stroke="#3A5AC0" stroke-width="1.5"/><path d="M4.2 3.2L5.2 4.2" stroke="#E0A060" stroke-width="1.2"/></svg>
<div class="t" style="left:574px;top:108.5px;width:57px;overflow:hidden;color:#fff">Documents for financial</div>
<div class="a" style="left:2px;top:119px;width:630px;height:13px;background:#0A246A;border-bottom:1px solid #3C5490"></div>
<div class="a" style="left:35px;top:119px;width:1px;height:13px;background:#3C5490"></div>
<div class="a" style="left:205px;top:119px;width:1px;height:13px;background:#3C5490"></div>
<div class="a" style="left:264px;top:119px;width:1px;height:13px;background:#3C5490"></div>
<div class="a" style="left:314px;top:119px;width:1px;height:13px;background:#3C5490"></div>
<div class="a" style="left:370px;top:119px;width:1px;height:13px;background:#3C5490"></div>
<div class="a" style="left:421px;top:119px;width:1px;height:13px;background:#3C5490"></div>
<div class="a" style="left:510px;top:119px;width:1px;height:13px;background:#3C5490"></div>
<div class="a" style="left:560px;top:119px;width:1px;height:13px;background:#3C5490"></div>
<div class="a" style="left:15px;top:123px;width:6px;height:6px;background:#fff"></div>
<div class="t" style="left:37px;top:121.5px;color:#fff;letter-spacing:-0.026px">Payroll Tax Returns for four quarters of the audit year</div>
<div class="t" style="left:205px;top:121.5px;width:60px;text-align:center;color:#fff">30.08.2015</div>
<div class="a" style="left:266.8px;top:120.2px;width:10px;height:10px;border-radius:50%;background:radial-gradient(circle at 50% 47%,#FFF8E0 0,#FFF0C8 20%,#F0A050 32%,#E08028 55%,#C06010 80%,#8A4008 100%)"></div>
<div class="t" style="left:279px;top:121.5px;color:#fff">Normal</div>
<svg style="left:317.5px;top:120.5px" width="8" height="10"><path d="M0.5 0.5H5L7.5 3V9.5H0.5Z" fill="#DDEBF7" stroke="#fff" stroke-width="0.8"/><path d="M5 0.5V3H7.5" fill="#fff" stroke="#9DB7D5" stroke-width="0.6"/></svg>
<div class="t" style="left:328px;top:121.5px;color:#fff">Created</div>
<div class="t" style="left:370px;top:121.5px;width:51px;text-align:center;color:#fff">0 %</div>
<div class="t" style="left:421px;top:121.5px;width:90px;text-align:center;color:#fff">2402d 4h 26m</div>
<svg style="left:562.5px;top:120.8px" width="10" height="9"><rect x="0.3" y="0.3" width="9" height="7" fill="#F4F8FC" stroke="#B8C8D8" stroke-width="0.5"/><path d="M0.5 7.3V4.5Q2.5 2.5 5 5.5L5 7.3Z" fill="#38A838"/><circle cx="3" cy="2.8" r="1.3" fill="#E8C040"/><path d="M4.5 3.5L9 8.2" stroke="#3A5AC0" stroke-width="1.5"/><path d="M4.2 3.2L5.2 4.2" stroke="#E0A060" stroke-width="1.2"/></svg>
<div class="t" style="left:574px;top:121.5px;width:57px;overflow:hidden;color:#fff">Documents for financial</div>
<div class="a" style="left:2px;top:132px;width:630px;height:13px;background:#0A246A;border-bottom:1px solid #3C5490"></div>
<div class="a" style="left:35px;top:132px;width:1px;height:13px;background:#3C5490"></div>
<div class="a" style="left:205px;top:132px;width:1px;height:13px;background:#3C5490"></div>
<div class="a" style="left:264px;top:132px;width:1px;height:13px;background:#3C5490"></div>
<div class="a" style="left:314px;top:132px;width:1px;height:13px;background:#3C5490"></div>
<div class="a" style="left:370px;top:132px;width:1px;height:13px;background:#3C5490"></div>
<div class="a" style="left:421px;top:132px;width:1px;height:13px;background:#3C5490"></div>
<div class="a" style="left:510px;top:132px;width:1px;height:13px;background:#3C5490"></div>
<div class="a" style="left:560px;top:132px;width:1px;height:13px;background:#3C5490"></div>
<div class="a" style="left:15px;top:136px;width:6px;height:6px;background:#fff"></div>
<div class="t" style="left:37px;top:134.5px;color:#fff;letter-spacing:-0.143px">Schedule of Taxes Received</div>
<div class="t" style="left:205px;top:134.5px;width:60px;text-align:center;color:#fff">30.08.2015</div>
<div class="a" style="left:266.8px;top:133.2px;width:10px;height:10px;border-radius:50%;background:radial-gradient(circle at 50% 47%,#FFF8E0 0,#FFF0C8 20%,#F0A050 32%,#E08028 55%,#C06010 80%,#8A4008 100%)"></div>
<div class="t" style="left:279px;top:134.5px;color:#fff">Normal</div>
<svg style="left:317.5px;top:133.5px" width="8" height="10"><path d="M0.5 0.5H5L7.5 3V9.5H0.5Z" fill="#DDEBF7" stroke="#fff" stroke-width="0.8"/><path d="M5 0.5V3H7.5" fill="#fff" stroke="#9DB7D5" stroke-width="0.6"/></svg>
<div class="t" style="left:328px;top:134.5px;color:#fff">Created</div>
<div class="t" style="left:370px;top:134.5px;width:51px;text-align:center;color:#fff">0 %</div>
<div class="t" style="left:421px;top:134.5px;width:90px;text-align:center;color:#fff">2402d 4h 26m</div>
<svg style="left:562.5px;top:133.8px" width="10" height="9"><rect x="0.3" y="0.3" width="9" height="7" fill="#F4F8FC" stroke="#B8C8D8" stroke-width="0.5"/><path d="M0.5 7.3V4.5Q2.5 2.5 5 5.5L5 7.3Z" fill="#38A838"/><circle cx="3" cy="2.8" r="1.3" fill="#E8C040"/><path d="M4.5 3.5L9 8.2" stroke="#3A5AC0" stroke-width="1.5"/><path d="M4.2 3.2L5.2 4.2" stroke="#E0A060" stroke-width="1.2"/></svg>
<div class="t" style="left:574px;top:134.5px;width:57px;overflow:hidden;color:#fff">Documents for financial</div>
<div class="a" style="left:2px;top:145px;width:630px;height:13px;background:#0A246A;border-bottom:1px solid #3C5490"></div>
<div class="a" style="left:35px;top:145px;width:1px;height:13px;background:#3C5490"></div>
<div class="a" style="left:205px;top:145px;width:1px;height:13px;background:#3C5490"></div>
<div class="a" style="left:264px;top:145px;width:1px;height:13px;background:#3C5490"></div>
<div class="a" style="left:314px;top:145px;width:1px;height:13px;background:#3C5490"></div>
<div class="a" style="left:370px;top:145px;width:1px;height:13px;background:#3C5490"></div>
<div class="a" style="left:421px;top:145px;width:1px;height:13px;background:#3C5490"></div>
<div class="a" style="left:510px;top:145px;width:1px;height:13px;background:#3C5490"></div>
<div class="a" style="left:560px;top:145px;width:1px;height:13px;background:#3C5490"></div>
<div class="a" style="left:15px;top:149px;width:6px;height:6px;background:#fff"></div>
<div class="t" style="left:37px;top:147.5px;color:#fff;letter-spacing:-0.244px">Repayment Schedules</div>
<div class="t" style="left:205px;top:147.5px;width:60px;text-align:center;color:#fff">30.08.2015</div>
<div class="a" style="left:266.8px;top:146.2px;width:10px;height:10px;border-radius:50%;background:radial-gradient(circle at 50% 47%,#FFF8E0 0,#FFF0C8 20%,#F0A050 32%,#E08028 55%,#C06010 80%,#8A4008 100%)"></div>
<div class="t" style="left:279px;top:147.5px;color:#fff">Normal</div>
<svg style="left:317.5px;top:146.5px" width="8" height="10"><path d="M0.5 0.5H5L7.5 3V9.5H0.5Z" fill="#DDEBF7" stroke="#fff" stroke-width="0.8"/><path d="M5 0.5V3H7.5" fill="#fff" stroke="#9DB7D5" stroke-width="0.6"/></svg>
<div class="t" style="left:328px;top:147.5px;color:#fff">Created</div>
<div class="t" style="left:370px;top:147.5px;width:51px;text-align:center;color:#fff">0 %</div>
<div class="t" style="left:421px;top:147.5px;width:90px;text-align:center;color:#fff">2402d 4h 26m</div>
<svg style="left:562.5px;top:146.8px" width="10" height="9"><rect x="0.3" y="0.3" width="9" height="7" fill="#F4F8FC" stroke="#B8C8D8" stroke-width="0.5"/><path d="M0.5 7.3V4.5Q2.5 2.5 5 5.5L5 7.3Z" fill="#38A838"/><circle cx="3" cy="2.8" r="1.3" fill="#E8C040"/><path d="M4.5 3.5L9 8.2" stroke="#3A5AC0" stroke-width="1.5"/><path d="M4.2 3.2L5.2 4.2" stroke="#E0A060" stroke-width="1.2"/></svg>
<div class="t" style="left:574px;top:147.5px;width:57px;overflow:hidden;color:#fff">Documents for financial</div>
<div class="a" style="left:2px;top:158px;width:630px;height:13px;background:#0A246A;border-bottom:1px solid #3C5490"></div>
<div class="a" style="left:35px;top:158px;width:1px;height:13px;background:#3C5490"></div>
<div class="a" style="left:205px;top:158px;width:1px;height:13px;background:#3C5490"></div>
<div class="a" style="left:264px;top:158px;width:1px;height:13px;background:#3C5490"></div>
<div class="a" style="left:314px;top:158px;width:1px;height:13px;background:#3C5490"></div>
<div class="a" style="left:370px;top:158px;width:1px;height:13px;background:#3C5490"></div>
<div class="a" style="left:421px;top:158px;width:1px;height:13px;background:#3C5490"></div>
<div class="a" style="left:510px;top:158px;width:1px;height:13px;background:#3C5490"></div>
<div class="a" style="left:560px;top:158px;width:1px;height:13px;background:#3C5490"></div>
<div class="a" style="left:15px;top:162px;width:6px;height:6px;background:#fff"></div>
<div class="t" style="left:37px;top:160.5px;color:#fff;letter-spacing:-0.07px">Current list of the Board of Directors</div>
<div class="t" style="left:205px;top:160.5px;width:60px;text-align:center;color:#fff">30.08.2015</div>
<div class="a" style="left:266.8px;top:159.2px;width:10px;height:10px;border-radius:50%;background:radial-gradient(circle at 50% 47%,#FFF8E0 0,#FFF0C8 20%,#F0A050 32%,#E08028 55%,#C06010 80%,#8A4008 100%)"></div>
<div class="t" style="left:279px;top:160.5px;color:#fff">Normal</div>
<svg style="left:317.5px;top:159.5px" width="8" height="10"><path d="M0.5 0.5H5L7.5 3V9.5H0.5Z" fill="#DDEBF7" stroke="#fff" stroke-width="0.8"/><path d="M5 0.5V3H7.5" fill="#fff" stroke="#9DB7D5" stroke-width="0.6"/></svg>
<div class="t" style="left:328px;top:160.5px;color:#fff">Created</div>
<div class="t" style="left:370px;top:160.5px;width:51px;text-align:center;color:#fff">0 %</div>
<div class="t" style="left:421px;top:160.5px;width:90px;text-align:center;color:#fff">2402d 4h 26m</div>
<svg style="left:562.5px;top:159.8px" width="10" height="9"><rect x="0.3" y="0.3" width="9" height="7" fill="#F4F8FC" stroke="#B8C8D8" stroke-width="0.5"/><path d="M0.5 7.3V4.5Q2.5 2.5 5 5.5L5 7.3Z" fill="#38A838"/><circle cx="3" cy="2.8" r="1.3" fill="#E8C040"/><path d="M4.5 3.5L9 8.2" stroke="#3A5AC0" stroke-width="1.5"/><path d="M4.2 3.2L5.2 4.2" stroke="#E0A060" stroke-width="1.2"/></svg>
<div class="t" style="left:574px;top:160.5px;width:57px;overflow:hidden;color:#fff">Documents for financial</div>
<div class="a" style="left:2px;top:171px;width:630px;height:13px;background:#0A246A;border-bottom:1px solid #3C5490"></div>
<div class="a" style="left:35px;top:171px;width:1px;height:13px;background:#3C5490"></div>
<div class="a" style="left:205px;top:171px;width:1px;height:13px;background:#3C5490"></div>
<div class="a" style="left:264px;top:171px;width:1px;height:13px;background:#3C5490"></div>
<div class="a" style="left:314px;top:171px;width:1px;height:13px;background:#3C5490"></div>
<div class="a" style="left:370px;top:171px;width:1px;height:13px;background:#3C5490"></div>
<div class="a" style="left:421px;top:171px;width:1px;height:13px;background:#3C5490"></div>
<div class="a" style="left:510px;top:171px;width:1px;height:13px;background:#3C5490"></div>
<div class="a" style="left:560px;top:171px;width:1px;height:13px;background:#3C5490"></div>
<div class="a" style="left:15px;top:175px;width:6px;height:6px;background:#fff"></div>
<div class="t" style="left:37px;top:173.5px;color:#fff;letter-spacing:-0.145px">Detail on Deferred Revenue</div>
<div class="t" style="left:205px;top:173.5px;width:60px;text-align:center;color:#fff">30.08.2015</div>
<div class="a" style="left:266.8px;top:172.2px;width:10px;height:10px;border-radius:50%;background:radial-gradient(circle at 50% 47%,#FFF8E0 0,#FFF0C8 20%,#F0A050 32%,#E08028 55%,#C06010 80%,#8A4008 100%)"></div>
<div class="t" style="left:279px;top:173.5px;color:#fff">Normal</div>
<svg style="left:317.5px;top:172.5px" width="8" height="10"><path d="M0.5 0.5H5L7.5 3V9.5H0.5Z" fill="#DDEBF7" stroke="#fff" stroke-width="0.8"/><path d="M5 0.5V3H7.5" fill="#fff" stroke="#9DB7D5" stroke-width="0.6"/></svg>
<div class="t" style="left:328px;top:173.5px;color:#fff">Created</div>
<div class="t" style="left:370px;top:173.5px;width:51px;text-align:center;color:#fff">0 %</div>
<div class="t" style="left:421px;top:173.5px;width:90px;text-align:center;color:#fff">2402d 4h 26m</div>
<svg style="left:562.5px;top:172.8px" width="10" height="9"><rect x="0.3" y="0.3" width="9" height="7" fill="#F4F8FC" stroke="#B8C8D8" stroke-width="0.5"/><path d="M0.5 7.3V4.5Q2.5 2.5 5 5.5L5 7.3Z" fill="#38A838"/><circle cx="3" cy="2.8" r="1.3" fill="#E8C040"/><path d="M4.5 3.5L9 8.2" stroke="#3A5AC0" stroke-width="1.5"/><path d="M4.2 3.2L5.2 4.2" stroke="#E0A060" stroke-width="1.2"/></svg>
<div class="t" style="left:574px;top:173.5px;width:57px;overflow:hidden;color:#fff">Documents for financial</div>
<div class="a" style="left:2px;top:184px;width:630px;height:13px;background:#0A246A;border-bottom:1px solid #3C5490"></div>
<div class="a" style="left:35px;top:184px;width:1px;height:13px;background:#3C5490"></div>
<div class="a" style="left:205px;top:184px;width:1px;height:13px;background:#3C5490"></div>
<div class="a" style="left:264px;top:184px;width:1px;height:13px;background:#3C5490"></div>
<div class="a" style="left:314px;top:184px;width:1px;height:13px;background:#3C5490"></div>
<div class="a" style="left:370px;top:184px;width:1px;height:13px;background:#3C5490"></div>
<div class="a" style="left:421px;top:184px;width:1px;height:13px;background:#3C5490"></div>
<div class="a" style="left:510px;top:184px;width:1px;height:13px;background:#3C5490"></div>
<div class="a" style="left:560px;top:184px;width:1px;height:13px;background:#3C5490"></div>
<div class="a" style="left:15px;top:188px;width:6px;height:6px;background:#fff"></div>
<div class="t" style="left:37px;top:186.5px;color:#fff;letter-spacing:-0.048px">Copy of prior audit and name of attorney(s)</div>
<div class="t" style="left:205px;top:186.5px;width:60px;text-align:center;color:#fff">30.08.2015</div>
<div class="a" style="left:266.8px;top:185.2px;width:10px;height:10px;border-radius:50%;background:radial-gradient(circle at 50% 47%,#FFF8E0 0,#FFF0C8 20%,#F0A050 32%,#E08028 55%,#C06010 80%,#8A4008 100%)"></div>
<div class="t" style="left:279px;top:186.5px;color:#fff">Normal</div>
<svg style="left:317.5px;top:185.5px" width="8" height="10"><path d="M0.5 0.5H5L7.5 3V9.5H0.5Z" fill="#DDEBF7" stroke="#fff" stroke-width="0.8"/><path d="M5 0.5V3H7.5" fill="#fff" stroke="#9DB7D5" stroke-width="0.6"/></svg>
<div class="t" style="left:328px;top:186.5px;color:#fff">Created</div>
<div class="t" style="left:370px;top:186.5px;width:51px;text-align:center;color:#fff">0 %</div>
<div class="t" style="left:421px;top:186.5px;width:90px;text-align:center;color:#fff">2402d 4h 26m</div>
<svg style="left:562.5px;top:185.8px" width="10" height="9"><rect x="0.3" y="0.3" width="9" height="7" fill="#F4F8FC" stroke="#B8C8D8" stroke-width="0.5"/><path d="M0.5 7.3V4.5Q2.5 2.5 5 5.5L5 7.3Z" fill="#38A838"/><circle cx="3" cy="2.8" r="1.3" fill="#E8C040"/><path d="M4.5 3.5L9 8.2" stroke="#3A5AC0" stroke-width="1.5"/><path d="M4.2 3.2L5.2 4.2" stroke="#E0A060" stroke-width="1.2"/></svg>
<div class="t" style="left:574px;top:186.5px;width:57px;overflow:hidden;color:#fff">Documents for financial</div>
<div class="a" style="left:2px;top:183.5px;width:630px;height:12.5px;border-top:1px dotted #A0AACC;border-bottom:1px dotted #A0AACC"></div>
<div class="a" style="left:0.5px;top:40px;width:632.5px;height:388px;border:1px solid #A09C94;box-shadow:0 1px 0 #F4F2EC"></div>
<div class="a" style="left:1.5px;top:41px;width:630.5px;height:1px;background:#EEECE6"></div>
<div class="a" style="left:2px;top:42px;width:38px;height:15px;background:#D4D0C8;border:1px solid;border-color:#fff #404040 transparent #fff"></div>
<div class="t" style="left:7px;top:45px;letter-spacing:-0.2px">Tasks list</div>
<div class="a" style="left:40px;top:43px;width:41px;height:12px;border:1px solid;border-color:#fff #404040 transparent #fff"></div>
<div class="t" style="left:44px;top:46px;letter-spacing:-0.3px">Resources</div>
<div class="a" style="left:37px;top:414px;width:595px;height:12px;border:1px solid;border-color:#A09C94 #D4D0C8 #D4D0C8 #A09C94"></div>
<div class="t" style="left:39px;top:417px;">Count: 10</div>
<div class="a" style="left:1px;top:429px;width:630px;height:11px;border:1px solid;border-color:#fff #808080 #808080 #fff"></div>
<div class="t" style="left:4px;top:431px;">Note</div>
<svg style="left:614px;top:431px" width="5" height="7"><path d="M1 0.5H4V4H1Z M0 4H5 M2.5 4V7" stroke="#000" stroke-width="0.9" fill="none"/></svg>
<svg style="left:623px;top:432px" width="6" height="6"><path d="M0.5 0.5L5.2 5.2M5.2 0.5L0.5 5.2" stroke="#505050" stroke-width="0.7"/></svg>
<div class="a" style="left:1px;top:441px;width:631px;height:101px;background:#fff;border:1px solid;border-color:#808080 #fff #fff #808080"></div>
<div class="a" style="left:1px;top:543px;width:631px;height:13px;background:#F5F3EE"></div>
<div class="a" style="left:4px;top:543px;width:20px;height:13px;background:#D4D0C8;border:1px solid;border-color:transparent #404040 #404040 #fff"></div>
<div class="t" style="left:6px;top:546px;">Note</div>
<div class="t" style="left:26px;top:546.3px;color:#6E6E6E;font-size:6.6px">Search result</div>
<div class="a" style="left:68px;top:545px;width:1px;height:9px;background:#B0B0B0"></div>
<div class="a" style="left:634px;top:41px;width:164.5px;height:10.5px;border:1px solid #A8A49C;box-shadow:inset 1px 1px 0 #F4F2EC"></div>
<div class="t" style="left:636px;top:43px;font-size:6.75px;letter-spacing:-0.12px">Categories Bar</div>
<div class="a" style="left:634px;top:53px;width:165px;height:175.5px;background:#fff;border:1px solid;border-color:#808080 #fff #fff #808080"></div>
<div class="a" style="left:634px;top:231.5px;width:164.5px;height:10px;border:1px solid #A8A49C;box-shadow:inset 1px 1px 0 #F4F2EC"></div>
<div class="t" style="left:636.5px;top:233px;font-size:6.75px;letter-spacing:-0.2px">Filters Bar</div>
<div class="a" style="left:634px;top:401px;width:164.5px;height:9px;border:1px solid #A8A49C;box-shadow:inset 1px 1px 0 #F4F2EC"></div>
<div class="a" style="left:634px;top:410px;width:165px;height:145px;background:#fff;border:1px solid;border-color:#808080 #fff #fff #808080"></div>
<svg style="left:773px;top:44px" width="5" height="5"><rect x="0.5" y="0.5" width="4" height="4" rx="0.6" fill="none" stroke="#303030" stroke-width="0.9"/></svg>
<svg style="left:782px;top:44px" width="5" height="6"><rect x="0.8" y="0" width="3.4" height="3.5" fill="#202020"/><path d="M0 3.6H5M2.5 3.6V5.5" stroke="#202020" stroke-width="0.9"/></svg>
<svg style="left:790px;top:44px" width="5" height="5"><path d="M0.3 0.3L4.7 4.7M4.7 0.3L0.3 4.7" stroke="#505050" stroke-width="0.75"/></svg>
<div class="a" style="left:634.5px;top:53.5px;width:138.5px;height:11.5px;background:#D4D0C8;border-right:1px solid #404040;border-bottom:1px solid #404040;border-left:1px solid #404040;border-top:1px solid #404040"></div>
<div class="a" style="left:773px;top:54px;width:13px;height:11px;background:#D4D0C8;border-right:1px solid #404040;border-bottom:1px solid #404040;border-left:1px solid #fff;border-top:1px solid #404040"></div>
<div class="a" style="left:786px;top:54px;width:13px;height:11px;background:#D4D0C8;border-right:1px solid #404040;border-bottom:1px solid #404040;border-left:1px solid #fff;border-top:1px solid #404040"></div>
<div class="t" style="left:775px;top:55.5px;font-size:6.5px">J...</div>
<div class="t" style="left:788px;top:55.5px;font-size:6.5px">&#1043;...</div>
<div class="a" style="left:652px;top:71px;width:0px;height:51px;border-left:1px solid #C8C8C8"></div>
<div class="a" style="left:653px;top:80.7px;width:6px;height:0px;border-top:1px solid #C8C8C8"></div>
<div class="a" style="left:653px;top:90.7px;width:6px;height:0px;border-top:1px solid #C8C8C8"></div>
<div class="a" style="left:653px;top:101.3px;width:6px;height:0px;border-top:1px solid #C8C8C8"></div>
<div class="a" style="left:653px;top:111.7px;width:6px;height:0px;border-top:1px solid #C8C8C8"></div>
<div class="a" style="left:664px;top:124px;width:0px;height:9px;border-left:1px solid #C8C8C8"></div>
<div class="a" style="left:665px;top:133px;width:5px;height:0px;border-top:1px solid #C8C8C8"></div>
<div class="a" style="left:637.5px;top:66.5px;width:6.5px;height:6.5px;background:#fff;border:1px solid #A0A0A0"></div>
<div class="a" style="left:639.0px;top:69.2px;width:3.5px;height:1px;background:#303030"></div>
<svg style="left:646.5px;top:65.5px" width="10" height="8"><path d="M0.5 1.5H3.5L4.5 2.5H8.5V7.5H0.5Z" fill="#E8C860" stroke="#B08A20" stroke-width="0.6"/><path d="M1.5 3.8H9.8L8.5 7.5H0.5Z" fill="#FFE88A" stroke="#C09A30" stroke-width="0.6"/></svg>
<svg style="left:660px;top:65px" width="10" height="9"><ellipse cx="5" cy="4.5" rx="4.3" ry="3.8" fill="#EAF2FA" stroke="#D89860" stroke-width="0.9"/><path d="M3 1.5Q5 4.5 3.5 8M5.5 1Q7 4 6 8" stroke="#4A80C0" stroke-width="0.8" fill="none"/></svg>
<div class="t" style="left:672.3px;top:65.6px;font-size:6.75px">Auditor's Solution - To Do List for</div>
<div class="t" style="left:776.5px;top:65.6px;font-size:6.75px">15</div>
<div class="t" style="left:789px;top:65.6px;font-size:6.75px">15</div>
<svg style="left:660px;top:76px" width="10" height="9"><circle cx="3" cy="2.5" r="2" fill="#E8A040"/><circle cx="7" cy="2.5" r="2" fill="#804020"/><path d="M0 8.5Q0 5 3 5Q5 5 5 8.5Z" fill="#3060C0"/><path d="M5 8.5Q5 5 7 5Q10 5 10 8.5Z" fill="#40A040"/></svg>
<div class="t" style="left:672.3px;top:76.7px;font-size:6.75px">Meetings</div>
<svg style="left:660px;top:86.2px" width="10" height="9"><ellipse cx="5" cy="4.5" rx="4.3" ry="3.8" fill="#EAF2FA" stroke="#D89860" stroke-width="0.9"/><path d="M3 1.5Q5 4.5 3.5 8M5.5 1Q7 4 6 8" stroke="#4A80C0" stroke-width="0.8" fill="none"/></svg>
<div class="t" style="left:672.3px;top:86.7px;font-size:6.75px">Reports</div>
<svg style="left:660px;top:96.5px" width="10" height="10"><path d="M1 0.5V9.5" stroke="#303080" stroke-width="1.2"/><path d="M1.5 1Q4 0 6 1.5Q8 2.5 9.5 1.5V6Q8 7 6 6Q4 4.5 1.5 5.5Z" fill="#5050C8" stroke="#303090" stroke-width="0.5"/></svg>
<div class="t" style="left:672.3px;top:97.3px;font-size:6.75px">Home chores</div>
<svg style="left:660px;top:106.5px" width="10" height="10"><circle cx="5" cy="5.8" r="3.9" fill="#DDEBFA" stroke="#2A6AC0" stroke-width="1.1"/><path d="M4 0.7H6M5 1V2" stroke="#2A6AC0" stroke-width="1"/><path d="M5 5.8L6.5 4.3" stroke="#204080" stroke-width="0.8"/></svg>
<div class="t" style="left:672.3px;top:107.7px;font-size:6.75px">Future plans</div>
<div class="t" style="left:780px;top:107.7px;font-size:6.75px">5</div>
<div class="t" style="left:792.5px;top:107.7px;font-size:6.75px">5</div>
<div class="a" style="left:649.3px;top:119px;width:6.5px;height:6.5px;background:#fff;border:1px solid #A0A0A0"></div>
<div class="a" style="left:650.8px;top:121.7px;width:3.5px;height:1px;background:#303030"></div>
<svg style="left:658.7px;top:118px" width="10" height="8"><path d="M0.5 1.5H3.5L4.5 2.5H8.5V7.5H0.5Z" fill="#E8C860" stroke="#B08A20" stroke-width="0.6"/><path d="M1.5 3.8H9.8L8.5 7.5H0.5Z" fill="#FFE88A" stroke="#C09A30" stroke-width="0.6"/></svg>
<svg style="left:673px;top:117.5px" width="8" height="10"><rect x="0.5" y="1" width="7" height="7" rx="1.5" fill="#D02020"/><rect x="2" y="0" width="4" height="2" fill="#A01010"/><path d="M2 8V10L4 9L6 10V8" fill="#B01818"/></svg>
<div class="t" style="left:684px;top:118px;font-size:6.75px">Checklist&amp;Templates</div>
<div class="t" style="left:776.5px;top:118px;font-size:6.75px">10</div>
<div class="t" style="left:789px;top:118px;font-size:6.75px">10</div>
<div class="a" style="left:670px;top:127.5px;width:103.5px;height:10.5px;background:#fff;border-top:1px solid #A8A8A8;border-bottom:1px solid #A8A8A8;border-left:1px solid #303030"></div>
<div class="a" style="left:773.5px;top:127.5px;width:24.5px;height:10.5px;background:#D4D0C8;border-top:1px solid #A8A8A8;border-bottom:1px solid #A8A8A8;border-right:1px solid #606060"></div>
<svg style="left:672px;top:128.3px" width="11" height="10"><rect x="0.5" y="0.5" width="9" height="7.5" fill="#F4F8FC" stroke="#206030" stroke-width="0.9"/><path d="M0.8 7.8V4.8Q2.8 2.8 5.5 6L5.5 7.8Z" fill="#30A030"/><circle cx="3.2" cy="3" r="1.3" fill="#E8C040"/><path d="M5 3.8L9.8 9.2" stroke="#3050C0" stroke-width="1.6"/></svg>
<div class="t" style="left:684.5px;top:129px;font-size:7px;font-weight:bold;letter-spacing:0.18px">Documents for financial</div>
<div class="t" style="left:776.5px;top:129px;font-size:6.75px;font-weight:bold">10</div>
<div class="t" style="left:789px;top:129px;font-size:6.75px;font-weight:bold">10</div>
<svg style="left:773px;top:234.5px" width="5" height="5"><rect x="0.5" y="0.5" width="4" height="4" rx="0.6" fill="none" stroke="#303030" stroke-width="0.9"/></svg>
<svg style="left:782px;top:234.5px" width="5" height="6"><rect x="0.8" y="0" width="3.4" height="3.5" fill="#202020"/><path d="M0 3.6H5M2.5 3.6V5.5" stroke="#202020" stroke-width="0.9"/></svg>
<svg style="left:790px;top:234.5px" width="5" height="5"><path d="M0.3 0.3L4.7 4.7M4.7 0.3L0.3 4.7" stroke="#505050" stroke-width="0.75"/></svg>
<div class="a" style="left:634.5px;top:243px;width:164px;height:124.5px;background:#D4D0C8;border:1px solid;border-color:#808080 #fff #fff #808080"></div>
<div class="a" style="left:696px;top:244px;width:1px;height:122.5px;background:#808080"></div>
<div class="a" style="left:697px;top:244px;width:1px;height:122.5px;background:#fff"></div>
<div class="t" style="left:646px;top:245.5px;width:50px;overflow:hidden;font-size:6.75px">Completion</div>
<div class="a" style="left:636px;top:255.86px;width:162px;height:1px;background:repeating-linear-gradient(90deg,#ACA8A0 0 2px,transparent 2px 3px)"></div>
<svg style="left:789.5px;top:248.5px" width="5" height="3"><path d="M0 0H4.5L2.25 2.5Z" fill="#000"/></svg>
<div class="t" style="left:646px;top:257.86px;width:50px;overflow:hidden;font-size:6.75px">Due Date</div>
<div class="a" style="left:636px;top:268.22px;width:162px;height:1px;background:repeating-linear-gradient(90deg,#ACA8A0 0 2px,transparent 2px 3px)"></div>
<svg style="left:789.5px;top:260.86px" width="5" height="3"><path d="M0 0H4.5L2.25 2.5Z" fill="#000"/></svg>
<div class="t" style="left:646px;top:270.22px;width:50px;overflow:hidden;font-size:6.75px">Status</div>
<div class="a" style="left:636px;top:280.58000000000004px;width:162px;height:1px;background:repeating-linear-gradient(90deg,#ACA8A0 0 2px,transparent 2px 3px)"></div>
<svg style="left:789.5px;top:273.22px" width="5" height="3"><path d="M0 0H4.5L2.25 2.5Z" fill="#000"/></svg>
<div class="t" style="left:646px;top:282.58px;width:50px;overflow:hidden;font-size:6.75px">Priority</div>
<div class="a" style="left:636px;top:292.94px;width:162px;height:1px;background:repeating-linear-gradient(90deg,#ACA8A0 0 2px,transparent 2px 3px)"></div>
<svg style="left:789.5px;top:285.58px" width="5" height="3"><path d="M0 0H4.5L2.25 2.5Z" fill="#000"/></svg>
<div class="t" style="left:646px;top:294.94px;width:50px;overflow:hidden;font-size:6.75px">Assignments</div>
<div class="a" style="left:636px;top:305.3px;width:162px;height:1px;background:repeating-linear-gradient(90deg,#ACA8A0 0 2px,transparent 2px 3px)"></div>
<svg style="left:789.5px;top:297.94px" width="5" height="3"><path d="M0 0H4.5L2.25 2.5Z" fill="#000"/></svg>
<div class="t" style="left:646px;top:307.3px;width:50px;overflow:hidden;font-size:6.75px">Task Name</div>
<div class="a" style="left:636px;top:317.66px;width:162px;height:1px;background:repeating-linear-gradient(90deg,#ACA8A0 0 2px,transparent 2px 3px)"></div>
<div class="t" style="left:646px;top:319.65999999999997px;width:50px;overflow:hidden;font-size:6.75px">Date Created</div>
<div class="a" style="left:636px;top:330.02px;width:162px;height:1px;background:repeating-linear-gradient(90deg,#ACA8A0 0 2px,transparent 2px 3px)"></div>
<svg style="left:789.5px;top:322.65999999999997px" width="5" height="3"><path d="M0 0H4.5L2.25 2.5Z" fill="#000"/></svg>
<div class="t" style="left:646px;top:332.02px;width:50px;overflow:hidden;font-size:6.75px">Date Last Modifi</div>
<div class="a" style="left:636px;top:342.38px;width:162px;height:1px;background:repeating-linear-gradient(90deg,#ACA8A0 0 2px,transparent 2px 3px)"></div>
<svg style="left:789.5px;top:335.02px" width="5" height="3"><path d="M0 0H4.5L2.25 2.5Z" fill="#000"/></svg>
<div class="t" style="left:646px;top:344.38px;width:50px;overflow:hidden;font-size:6.75px">Date Opened</div>
<div class="a" style="left:636px;top:354.74px;width:162px;height:1px;background:repeating-linear-gradient(90deg,#ACA8A0 0 2px,transparent 2px 3px)"></div>
<svg style="left:789.5px;top:347.38px" width="5" height="3"><path d="M0 0H4.5L2.25 2.5Z" fill="#000"/></svg>
<div class="t" style="left:646px;top:356.74px;width:50px;overflow:hidden;font-size:6.75px">Date Completed</div>
<svg style="left:789.5px;top:359.74px" width="5" height="3"><path d="M0 0H4.5L2.25 2.5Z" fill="#000"/></svg>
<div class="t" style="left:636px;top:402px;font-size:6.75px">F</div>
<svg style="left:773px;top:403.5px" width="5" height="5"><rect x="0.5" y="0.5" width="4" height="4" rx="0.6" fill="none" stroke="#303030" stroke-width="0.9"/></svg>
<svg style="left:782px;top:403.5px" width="5" height="6"><rect x="0.8" y="0" width="3.4" height="3.5" fill="#202020"/><path d="M0 3.6H5M2.5 3.6V5.5" stroke="#202020" stroke-width="0.9"/></svg>
<svg style="left:790px;top:403.5px" width="5" height="5"><path d="M0.3 0.3L4.7 4.7M4.7 0.3L0.3 4.7" stroke="#505050" stroke-width="0.75"/></svg>
<div class="a" style="left:638px;top:369.5px;width:111.5px;height:175px;background:#D4D0C8;border:1px solid;border-color:#D4D0C8 #404040 #404040 #D4D0C8;box-shadow:inset 1px 1px 0 #fff, inset -1px -1px 0 #808080"></div>
<div class="a" style="left:640px;top:372px;width:107.5px;height:8.5px;background:linear-gradient(90deg,#808080,#C0C0C0)"></div>
<div class="t" style="left:641.5px;top:372.3px;font-size:7px;font-weight:bold;color:#D4D0C8;line-height:8px">Customization</div>
<div class="a" style="left:739.5px;top:373px;width:6.5px;height:6.5px;background:#D4D0C8;border:1px solid;border-color:#fff #404040 #404040 #fff"></div>
<svg style="left:741px;top:374.5px" width="4" height="4"><path d="M0.3 0.3L3.7 3.7M3.7 0.3L0.3 3.7" stroke="#000" stroke-width="0.8"/></svg>
<div class="a" style="left:641px;top:381px;width:105px;height:14.5px;background:#EAE7E0"></div>
<div class="a" style="left:644px;top:383px;width:32.5px;height:12.5px;background:#EAE7E0;border:1px solid;border-color:#505050 #404040 transparent #505050;box-shadow:inset 1px 1px 0 #fff"></div>
<div class="a" style="left:641px;top:394.5px;width:3px;height:1px;background:#404040"></div>
<div class="a" style="left:676.5px;top:394.5px;width:69.5px;height:1px;background:#404040"></div>
<div class="t" style="left:648px;top:385.5px;font-size:6.75px">Columns</div>
<div class="a" style="left:641px;top:395.5px;width:105px;height:146px;background:#D4D0C8"></div>
<div class="a" style="left:641.5px;top:396.3px;width:104.5px;height:11.3px;background:#D4D0C8;border:1px solid;border-color:#303030 #303030 #202020 #303030;box-shadow:inset 1px 1px 0 #F0EEE8"></div>
<div class="t" style="left:644px;top:399.1px;font-size:6.75px">Actual Time</div>
<div class="a" style="left:641.5px;top:407.45px;width:104.5px;height:11.3px;background:#D4D0C8;border:1px solid;border-color:#303030 #303030 #202020 #303030;box-shadow:inset 1px 1px 0 #F0EEE8"></div>
<div class="t" style="left:644px;top:410.25px;font-size:6.75px">Date Completed</div>
<div class="a" style="left:641.5px;top:418.6px;width:104.5px;height:11.3px;background:#D4D0C8;border:1px solid;border-color:#303030 #303030 #202020 #303030;box-shadow:inset 1px 1px 0 #F0EEE8"></div>
<div class="t" style="left:644px;top:421.40000000000003px;font-size:6.75px">Date Created</div>
<div class="a" style="left:641.5px;top:429.75px;width:104.5px;height:11.3px;background:#D4D0C8;border:1px solid;border-color:#303030 #303030 #202020 #303030;box-shadow:inset 1px 1px 0 #F0EEE8"></div>
<div class="t" style="left:644px;top:432.55px;font-size:6.75px">Date Last Modified</div>
<div class="a" style="left:641.5px;top:440.90000000000003px;width:104.5px;height:11.3px;background:#D4D0C8;border:1px solid;border-color:#303030 #303030 #202020 #303030;box-shadow:inset 1px 1px 0 #F0EEE8"></div>
<div class="t" style="left:644px;top:443.70000000000005px;font-size:6.75px">Date Opened</div>
<div class="a" style="left:641.5px;top:452.05px;width:104.5px;height:11.3px;background:#D4D0C8;border:1px solid;border-color:#303030 #303030 #202020 #303030;box-shadow:inset 1px 1px 0 #F0EEE8"></div>
<div class="t" style="left:644px;top:454.85px;font-size:6.75px">Days Left</div>
<div class="a" style="left:641.5px;top:463.20000000000005px;width:104.5px;height:11.3px;background:#D4D0C8;border:1px solid;border-color:#303030 #303030 #202020 #303030;box-shadow:inset 1px 1px 0 #F0EEE8"></div>
<div class="t" style="left:644px;top:466.00000000000006px;font-size:6.75px">Department</div>
<div class="a" style="left:641.5px;top:474.35px;width:104.5px;height:11.3px;background:#D4D0C8;border:1px solid;border-color:#303030 #303030 #202020 #303030;box-shadow:inset 1px 1px 0 #F0EEE8"></div>
<div class="t" style="left:644px;top:477.15000000000003px;font-size:6.75px">Due Date&amp;Time</div>
<div class="a" style="left:641.5px;top:485.5px;width:104.5px;height:11.3px;background:#D4D0C8;border:1px solid;border-color:#303030 #303030 #202020 #303030;box-shadow:inset 1px 1px 0 #F0EEE8"></div>
<div class="t" style="left:644px;top:488.3px;font-size:6.75px">Estimated Time</div>
<div class="a" style="left:641.5px;top:496.65000000000003px;width:104.5px;height:11.3px;background:#D4D0C8;border:1px solid;border-color:#303030 #303030 #202020 #303030;box-shadow:inset 1px 1px 0 #F0EEE8"></div>
<div class="t" style="left:644px;top:499.45000000000005px;font-size:6.75px">Info</div>
<div class="a" style="left:641.5px;top:507.8px;width:104.5px;height:11.3px;background:#D4D0C8;border:1px solid;border-color:#303030 #303030 #202020 #303030;box-shadow:inset 1px 1px 0 #F0EEE8"></div>
<div class="t" style="left:644px;top:510.6px;font-size:6.75px">Reminder Time</div>
<div class="a" style="left:641.5px;top:518.95px;width:104.5px;height:11.3px;background:#D4D0C8;border:1px solid;border-color:#303030 #303030 #202020 #303030;box-shadow:inset 1px 1px 0 #F0EEE8"></div>
<div class="t" style="left:644px;top:521.75px;font-size:6.75px">Resources</div>
<div class="a" style="left:641.5px;top:530px;width:104.5px;height:11px;background:#D4D0C8;border:1px solid;border-color:#808080 #fff #fff #808080"></div>
<div class="a" style="left:172px;top:183px;width:166.5px;height:284.5px;background:#fff;border:1px solid #8A8A8A;box-shadow:1px 1px 1px rgba(0,0,0,0.25)"></div>
<div class="a" style="left:173px;top:184px;width:14.5px;height:140.5px;background:#D6D3CE"></div>
<div class="a" style="left:173px;top:338.5px;width:14.5px;height:58.0px;background:#D6D3CE"></div>
<div class="a" style="left:173px;top:410px;width:14.5px;height:56.5px;background:#D6D3CE"></div>
<div class="a" style="left:173px;top:239.5px;width:165px;height:12px;background:#B6BDD2;border:1px solid #34467A"></div>
<svg style="left:175px;top:186px" width="11" height="10"><path d="M0.5 0.5H3L4 1.5H5.5V5H0.5Z" fill="#F8E070" stroke="#C8A040" stroke-width="0.5"/><rect x="0.8" y="5" width="3.5" height="4.5" fill="#C8D8F0" stroke="#8AA0C8" stroke-width="0.4"/><circle cx="7" cy="6.5" r="2.8" fill="#fff" stroke="#E05050" stroke-width="0.8"/><path d="M5.5 1.5L7.5 0.5L9 2.5" stroke="#7090C8" stroke-width="0.6" fill="none"/></svg>
<svg style="left:175px;top:199px" width="11" height="10"><rect x="0.5" y="1" width="7" height="8.5" fill="#E8F0FA" stroke="#A0B4D0" stroke-width="0.6"/><path d="M2 8.5L8.5 2" stroke="#707890" stroke-width="1.5"/><circle cx="9" cy="1.5" r="1.3" fill="#E08030"/></svg>
<svg style="left:175px;top:211.5px" width="11" height="10"><path d="M0.5 2.5Q2 0.5 4 1.8" stroke="#7090C8" stroke-width="1" fill="none"/><path d="M4.5 1L8.5 3L5.5 5Z" fill="#30A040"/><ellipse cx="5.5" cy="7" rx="3.5" ry="2.8" fill="#B0D8F4" stroke="#6090C0" stroke-width="0.5"/></svg>
<svg style="left:175.5px;top:241px" width="10" height="9"><rect x="0.5" y="2" width="5.5" height="6.5" fill="#fff" stroke="#7080B0" stroke-width="0.6"/><rect x="3.5" y="0.5" width="5.5" height="7" fill="#E0E8F8" stroke="#5070B0" stroke-width="0.6"/></svg>
<svg style="left:175.5px;top:253.5px" width="10" height="9.5"><rect x="0.5" y="1" width="6" height="8" fill="#EAEAEA" stroke="#C0C0C0" stroke-width="0.6"/><rect x="4" y="3" width="5.5" height="6" fill="#F8F8F8" stroke="#C8C8C8" stroke-width="0.6"/></svg>
<svg style="left:175.5px;top:270px" width="9" height="8"><rect x="0.5" y="0.5" width="8" height="7" rx="1.5" fill="#E2E2E2" stroke="#D0D0D0" stroke-width="0.5"/><path d="M2.5 5L4.5 3L6.5 5" stroke="#fff" stroke-width="1" fill="none"/></svg>
<svg style="left:175.5px;top:282.5px" width="9" height="8"><rect x="0.5" y="0.5" width="8" height="7" rx="1.5" fill="#E2E2E2" stroke="#D0D0D0" stroke-width="0.5"/><path d="M2.5 3L4.5 5L6.5 3" stroke="#fff" stroke-width="1" fill="none"/></svg>
<svg style="left:175.5px;top:298.5px" width="9" height="8.5"><rect x="0.3" y="0.3" width="8.4" height="8" rx="1" fill="#3A88E0" stroke="#2A68B8" stroke-width="0.5"/><path d="M2.3 4L4.5 2L6.7 4M2.3 6.5L4.5 4.5L6.7 6.5" stroke="#fff" stroke-width="0.8" fill="none"/></svg>
<svg style="left:175.5px;top:311.3px" width="9" height="8.5"><rect x="0.3" y="0.3" width="8.4" height="8" rx="1" fill="#3A88E0" stroke="#2A68B8" stroke-width="0.5"/><path d="M2.3 2L4.5 4L6.7 2M2.3 4.5L4.5 6.5L6.7 4.5" stroke="#fff" stroke-width="0.8" fill="none"/></svg>
<svg style="left:175px;top:341.5px" width="11" height="10"><circle cx="5" cy="3.5" r="3.2" fill="#F8E0B0"/><path d="M0.5 4.5L5 6.5L9 4.5V8.5H0.5Z" fill="#E8EEF8" stroke="#9AAAC8" stroke-width="0.5"/><circle cx="8" cy="7.5" r="2.2" fill="#6A98E0"/></svg>
<svg style="left:175px;top:357px" width="11" height="10"><rect x="0.5" y="0.5" width="4.5" height="2" fill="#B8D0F0" stroke="#6080B0" stroke-width="0.5"/><rect x="0.5" y="7" width="4.5" height="2" fill="#B8D0F0" stroke="#6080B0" stroke-width="0.5"/><rect x="6" y="3.8" width="4.5" height="2" fill="#B8D0F0" stroke="#6080B0" stroke-width="0.5"/><path d="M3 2.5V8M3 4.8H6" stroke="#50A080" stroke-width="0.7"/></svg>
<div class="t" style="left:192px;top:187.9px;font-size:6.75px;">Create Task</div>
<div class="t" style="left:250px;top:187.9px;width:71px;text-align:right;font-size:6.75px;">Ins</div>
<div class="t" style="left:192px;top:200.65px;font-size:6.75px;">Edit Task</div>
<div class="t" style="left:250px;top:200.65px;width:71px;text-align:right;font-size:6.75px;">F4</div>
<div class="t" style="left:192px;top:213.4px;font-size:6.75px;">Delete Task(s)</div>
<div class="t" style="left:192px;top:226.4px;font-size:6.75px;">Duplicate Task</div>
<div class="t" style="left:250px;top:226.4px;width:71px;text-align:right;font-size:6.75px;">Ctrl+D</div>
<div class="t" style="left:192px;top:242.3px;font-size:6.75px;">Copy Tasks</div>
<div class="t" style="left:250px;top:242.3px;width:71px;text-align:right;font-size:6.75px;">Ctrl+C</div>
<div class="t" style="left:192px;top:255.15px;font-size:6.75px;color:#A0A0A0">Paste Tasks</div>
<div class="t" style="left:250px;top:255.15px;width:71px;text-align:right;font-size:6.75px;color:#A0A0A0">Ctrl+V</div>
<div class="t" style="left:192px;top:271.15px;font-size:6.75px;color:#A0A0A0">Task Move Up</div>
<div class="t" style="left:250px;top:271.15px;width:71px;text-align:right;font-size:6.75px;color:#A0A0A0">Ctrl+Up</div>
<div class="t" style="left:192px;top:283.9px;font-size:6.75px;color:#A0A0A0">Task Move Down</div>
<div class="t" style="left:250px;top:283.9px;width:71px;text-align:right;font-size:6.75px;color:#A0A0A0">Ctrl+Down</div>
<div class="t" style="left:192px;top:299.65px;font-size:6.75px;">Increase Priority</div>
<div class="t" style="left:250px;top:299.65px;width:71px;text-align:right;font-size:6.75px;">Shift+Ctrl+Up</div>
<div class="t" style="left:192px;top:312.4px;font-size:6.75px;">Decrease Priority</div>
<div class="t" style="left:250px;top:312.4px;width:71px;text-align:right;font-size:6.75px;">Shift+Ctrl+Down</div>
<div class="t" style="left:192px;top:342.9px;font-size:6.75px;">Send task to assigned resource</div>
<div class="t" style="left:250px;top:342.9px;width:71px;text-align:right;font-size:6.75px;">Ctrl+I</div>
<div class="t" style="left:192px;top:358.9px;font-size:6.75px;">Paste New Task(s)</div>
<div class="t" style="left:192px;top:374.9px;font-size:6.75px;">Change Status</div>
<svg style="left:330px;top:375.5px" width="3" height="5"><path d="M0 0V5L3 2.5Z" fill="#000"/></svg>
<div class="t" style="left:192px;top:387.4px;font-size:6.75px;">Change Category</div>
<svg style="left:330px;top:388.0px" width="3" height="5"><path d="M0 0V5L3 2.5Z" fill="#000"/></svg>
<div class="t" style="left:192px;top:415.2px;font-size:6.75px;">Export</div>
<svg style="left:330px;top:415.8px" width="3" height="5"><path d="M0 0V5L3 2.5Z" fill="#000"/></svg>
<div class="t" style="left:192px;top:430.9px;font-size:6.75px;">Always Expand</div>
<div class="t" style="left:192px;top:443.9px;font-size:6.75px;color:#A0A0A0">Expand All</div>
<div class="t" style="left:250px;top:443.9px;width:71px;text-align:right;font-size:6.75px;color:#A0A0A0">Ctrl+Alt+E</div>
<div class="t" style="left:192px;top:456.9px;font-size:6.75px;color:#A0A0A0">Collapse All</div>
<div class="t" style="left:250px;top:456.9px;width:71px;text-align:right;font-size:6.75px;color:#A0A0A0">Ctrl+Alt+C</div>
<div class="a" style="left:192px;top:237.4px;width:145px;height:1px;background:#C5C5C5"></div>
<div class="a" style="left:192px;top:266px;width:145px;height:1px;background:#C5C5C5"></div>
<div class="a" style="left:192px;top:294.5px;width:145px;height:1px;background:#C5C5C5"></div>
<div class="a" style="left:192px;top:322.5px;width:145px;height:1px;background:#C5C5C5"></div>
<div class="a" style="left:192px;top:338.5px;width:145px;height:1px;background:#C5C5C5"></div>
<div class="a" style="left:192px;top:354px;width:145px;height:1px;background:#C5C5C5"></div>
<div class="a" style="left:192px;top:370px;width:145px;height:1px;background:#C5C5C5"></div>
<div class="a" style="left:192px;top:411px;width:145px;height:1px;background:#C5C5C5"></div>
<div class="a" style="left:192px;top:426px;width:145px;height:1px;background:#C5C5C5"></div>
<div class="t" style="left:176.5px;top:326.8px;font-size:6.75px;color:#A0A0A0">Filter Presets</div>
<div class="a" style="left:219px;top:325px;width:118px;height:12px;background:#fff;border:1px solid #C8C8C8"></div>
<div class="t" style="left:222px;top:327px;font-size:6.75px;color:#B0B0B0">Custom</div>
<div class="a" style="left:329px;top:326px;width:7px;height:10px;background:#E8E6E0"></div>
<svg style="left:330.5px;top:330px" width="4" height="3"><path d="M0 0H4L2 2.5Z" fill="#A0A0A0"/></svg>
<div class="t" style="left:176.5px;top:399.6px;font-size:6.75px">Set Due Date for selected tasks</div>
<div class="a" style="left:274.5px;top:397.5px;width:63px;height:12px;background:#fff;border:1px solid #C8C8C8"></div>
<div class="t" style="left:277px;top:400px;font-size:6.75px">&#1055;&#1090; 30.01.2009</div>
<div class="a" style="left:329.5px;top:398.5px;width:7px;height:10px;background:#E0DED8"></div>
<svg style="left:331px;top:402.5px" width="4" height="3"><path d="M0 0H4L2 2.5Z" fill="#000"/></svg>
<div class="a" style="left:174px;top:428px;width:12px;height:11.5px;background:#D0D4E4;border:1px solid #5A6A98"></div>
<svg style="left:177px;top:431.8px" width="6" height="5"><path d="M0.5 2.2L2 3.7L5.2 0.6" stroke="#202020" stroke-width="1.1" fill="none"/></svg>
</body></html>
